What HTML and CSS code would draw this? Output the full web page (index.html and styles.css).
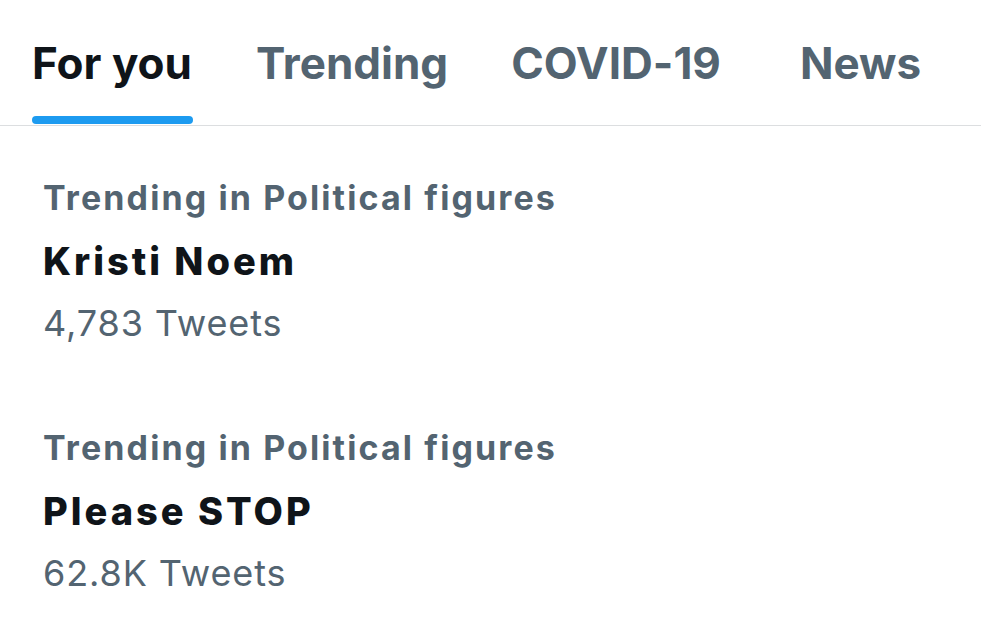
FILE: index.html
```html
<!DOCTYPE html>
<html lang="en">
<head>
<meta charset="utf-8">
<title>Explore</title>
<link rel="stylesheet" href="styles.css">
</head>
<body>
<nav class="tabs">
  <div class="tab tab-active tab-foryou"><span class="tab-label">For you</span><span class="indicator"></span></div>
  <div class="tab tab-trending"><span class="tab-label">Trending</span><span class="indicator"></span></div>
  <div class="tab tab-covid"><span class="tab-label">COVID-19</span><span class="indicator"></span></div>
  <div class="tab tab-news"><span class="tab-label">News</span><span class="indicator"></span></div>
</nav>
<main class="trends">
  <div class="trend">
    <div class="trend-context">Trending in Political figures</div>
    <div class="trend-title">Kristi Noem</div>
    <div class="trend-count">4,783 Tweets</div>
  </div>
  <div class="trend">
    <div class="trend-context">Trending in Political figures</div>
    <div class="trend-title">Please STOP</div>
    <div class="trend-count">62.8K Tweets</div>
  </div>
</main>
</body>
</html>
```
FILE: styles.css
```css
html, body {
  margin: 0;
  padding: 0;
  background: #ffffff;
}
body {
  width: 981px;
  height: 632px;
  overflow: hidden;
  font-family: Inter, "Liberation Sans", Arial, sans-serif;
  font-feature-settings: "liga" 0;
  font-variant-ligatures: none;
}
.tabs {
  display: flex;
  align-items: flex-start;
  padding: 36px 0 0 32px;
  border-bottom: 1px solid #dcdee0;
}
.tab {
  display: flex;
  flex-direction: column;
  align-items: stretch;
}
.tab-label {
  font-weight: 700;
  font-size: 44px;
  color: #536471;
  line-height: 54px;
  height: 54px;
  padding: 0 1px 0 0;
  white-space: nowrap;
}
.tab-active .tab-label {
  color: #0f1419;
}
.indicator {
  height: 8px;
  margin-top: 26px;
  margin-bottom: 1px;
  border-radius: 4px;
  background: transparent;
}
.tab-active .indicator {
  background: #1d9bf0;
}
.tab-trending { margin-left: 63px; }
.tab-covid { margin-left: 62px; }
.tab-news { margin-left: 78px; }

.trends {
  padding-left: 43px;
}
.trend {
  padding: 52px 0 29px 0;
}
.trend-context {
  font-weight: 700;
  font-size: 34px;
  line-height: 40px;
  letter-spacing: 2.1px;
  color: #536471;
}
.trend-title {
  font-weight: 800;
  font-size: 38px;
  line-height: 50px;
  letter-spacing: 3px;
  margin-top: 18px;
  color: #0f1419;
}
.trend-count {
  font-weight: 400;
  font-size: 36px;
  line-height: 48px;
  letter-spacing: 0.9px;
  margin-top: 13px;
  color: #536471;
}
```
